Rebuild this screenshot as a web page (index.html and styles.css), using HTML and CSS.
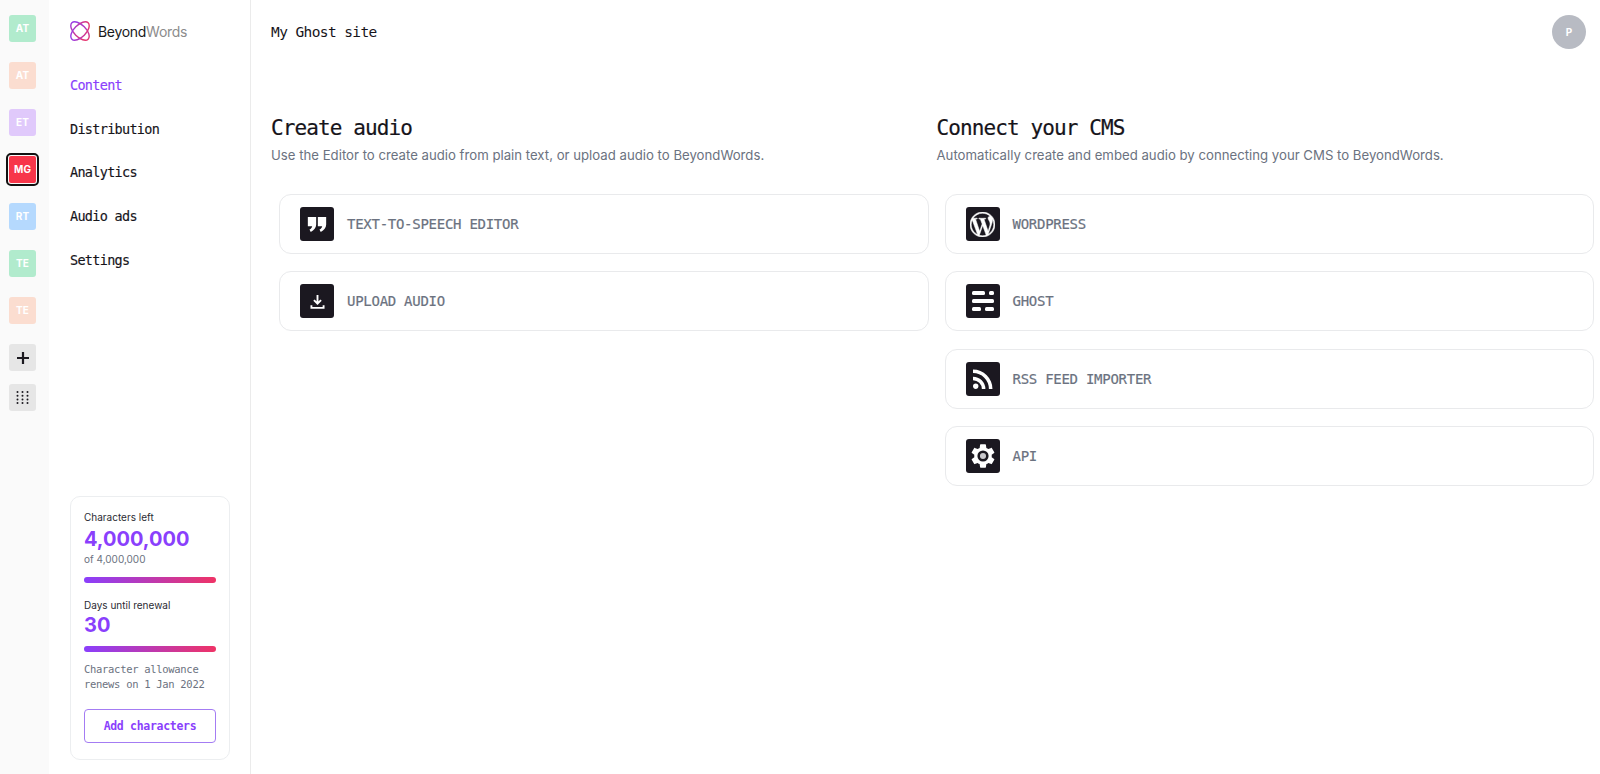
FILE: index.html
```html
<!DOCTYPE html>
<html lang="en">
<head>
<meta charset="utf-8">
<title>BeyondWords</title>
<link rel="stylesheet" href="styles.css">
</head>
<body>
<div class="app">
  <aside class="rail">
    <div class="tile green">AT</div>
    <div class="tile peach">AT</div>
    <div class="tile lilac">ET</div>
    <div class="tile red">MG</div>
    <div class="tile blue">RT</div>
    <div class="tile green">TE</div>
    <div class="tile peach">TE</div>
    <div class="rail-tools">
      <div class="tile tool">
        <svg width="14" height="14" viewBox="0 0 14 14"><path d="M7 1v12M1 7h12" stroke="#1c1a20" stroke-width="2.200"/></svg>
      </div>
      <div class="tile tool">
        <svg width="13" height="13" viewBox="0 0 13 13" fill="#1c1a20"><circle cx="1.500" cy="1" r="1"/><circle cx="6.500" cy="1" r="1"/><circle cx="11.500" cy="1" r="1"/><circle cx="1.500" cy="4.700" r="1"/><circle cx="6.500" cy="4.700" r="1"/><circle cx="11.500" cy="4.700" r="1"/><circle cx="1.500" cy="8.400" r="1"/><circle cx="6.500" cy="8.400" r="1"/><circle cx="11.500" cy="8.400" r="1"/><circle cx="1.500" cy="12" r="1"/><circle cx="6.500" cy="12" r="1"/><circle cx="11.500" cy="12" r="1"/></svg>
      </div>
    </div>
  </aside>
  <nav class="sidebar">
    <div class="logo">
      <svg width="20" height="20" viewBox="0 0 20 20" fill="none" stroke="url(#lg)" stroke-width="1.400">
        <defs><linearGradient id="lg" gradientUnits="userSpaceOnUse" x1="0" y1="2" x2="20" y2="18"><stop offset="0" stop-color="#8b3cf7"/><stop offset="1" stop-color="#f0345f"/></linearGradient></defs>
        <ellipse cx="10" cy="10" rx="11.500" ry="6" transform="rotate(45 10 10)"/>
        <ellipse cx="10" cy="10" rx="11.500" ry="6" transform="rotate(-45 10 10)"/>
      </svg>
      <span class="logo-text">Beyond<span class="logo-light">Words</span></span>
    </div>
    <ul class="menu">
      <li class="active">Content</li>
      <li>Distribution</li>
      <li>Analytics</li>
      <li>Audio ads</li>
      <li>Settings</li>
    </ul>
    <section class="usage">
      <div class="usage-label first">Characters left</div>
      <div class="usage-value">4,000,000</div>
      <div class="usage-of">of 4,000,000</div>
      <div class="bar"></div>
      <div class="usage-label second">Days until renewal</div>
      <div class="usage-value">30</div>
      <div class="bar short"></div>
      <p class="usage-note">Character allowance renews on 1 Jan 2022</p>
      <button class="add-btn">Add characters</button>
    </section>
  </nav>
  <main class="main">
    <header class="topbar">
      <div class="site-name">My Ghost site</div>
      <div class="avatar">P</div>
    </header>
    <div class="columns">
      <section>
        <h2>Create audio</h2>
        <p class="sub">Use the Editor to create audio from plain text, or upload audio to BeyondWords.</p>
        <div class="rows">
          <a class="row">
            <span class="ico"><svg width="20" height="17" viewBox="0 0 24 20" fill="#fff"><path d="M1 1h10v9c0 4-2.500 7-6.500 9l-1.500-3c2-1 3-2.500 3.200-4H1zM13 1h10v9c0 4-2.500 7-6.500 9L15 16c2-1 3-2.500 3.200-4H13z"/></svg></span>
            <span class="row-label">TEXT-TO-SPEECH EDITOR</span>
          </a>
          <a class="row">
            <span class="ico"><svg width="15" height="15" viewBox="0 0 16 16" fill="none" stroke="#fff" stroke-width="2"><path d="M8 1v9M4.200 6.500L8 10.300l3.800-3.800M1.500 12v2.800h13V12"/></svg></span>
            <span class="row-label">UPLOAD AUDIO</span>
          </a>
        </div>
      </section>
      <section>
        <h2>Connect your CMS</h2>
        <p class="sub">Automatically create and embed audio by connecting your CMS to BeyondWords.</p>
        <div class="rows">
          <a class="row">
            <span class="ico"><svg width="25" height="25" viewBox="0 0 24 24" fill="#fff" stroke="#fff" stroke-width=".5"><path d="M21.469 6.825c.84 1.537 1.318 3.3 1.318 5.175 0 3.979-2.156 7.456-5.363 9.325l3.295-9.527c.615-1.54.82-2.771.82-3.864 0-.405-.026-.78-.07-1.11m-7.981.105c.647-.03 1.232-.105 1.232-.105.582-.075.514-.93-.067-.899 0 0-1.755.135-2.88.135-1.064 0-2.85-.15-2.85-.15-.585-.03-.661.855-.075.885 0 0 .54.061 1.125.09l1.68 4.605-2.37 7.08L5.354 6.9c.649-.03 1.234-.1 1.234-.1.585-.075.516-.93-.065-.896 0 0-1.746.138-2.874.138-.2 0-.438-.008-.69-.015C4.911 3.15 8.235 1.215 12 1.215c2.809 0 5.365 1.072 7.286 2.833-.046-.003-.091-.009-.141-.009-1.06 0-1.812.923-1.812 1.914 0 .89.513 1.643 1.06 2.531.411.72.89 1.643.89 2.977 0 .915-.354 1.994-.821 3.479l-1.075 3.585-3.9-11.61.001.014zM12 22.784c-1.059 0-2.081-.153-3.048-.437l3.237-9.406 3.315 9.087c.024.053.05.101.078.149-1.12.393-2.325.609-3.582.609M1.211 12c0-1.564.336-3.05.935-4.39L7.29 21.709C3.694 19.96 1.212 16.271 1.211 12M12 0C5.385 0 0 5.385 0 12s5.385 12 12 12 12-5.385 12-12S18.615 0 12 0"/></svg></span>
            <span class="row-label">WORDPRESS</span>
          </a>
          <a class="row">
            <span class="ico"><svg width="22" height="20" viewBox="0 0 22 20" fill="#fff"><rect x="0" y="0" width="13" height="4" rx="1.500"/><rect x="17" y="0" width="5" height="4" rx="1.500"/><rect x="0" y="8" width="22" height="4" rx="1.500"/><rect x="0" y="16" width="9" height="4" rx="1.500"/><rect x="13" y="16" width="9" height="4" rx="1.500"/></svg></span>
            <span class="row-label">GHOST</span>
          </a>
          <a class="row">
            <span class="ico"><svg width="30" height="30" viewBox="0 0 24 24" fill="#fff"><path d="M6.180 15.640a2.180 2.180 0 012.180 2.180C8.360 19 7.380 20 6.180 20 5 20 4 19 4 17.820a2.180 2.180 0 012.180-2.180M4 4.440A15.560 15.560 0 0119.560 20h-2.830A12.730 12.730 0 004 7.270V4.440m0 5.660a9.900 9.900 0 019.900 9.900h-2.830A7.070 7.070 0 004 12.930V10.100z"/></svg></span>
            <span class="row-label">RSS FEED IMPORTER</span>
          </a>
          <a class="row">
            <span class="ico"><svg width="28" height="28" viewBox="0 0 24 24" fill="#fff"><path d="M19.430 12.970c.04-.32.07-.64.07-.97 0-.33-.03-.66-.07-1l2.110-1.630c.19-.15.24-.42.12-.64l-2-3.460c-.12-.22-.39-.31-.61-.22l-2.490 1c-.52-.39-1.060-.73-1.690-.98l-.37-2.650A.506.506 0 0 0 14 2h-4c-.25 0-.46.18-.5.420l-.37 2.650c-.63.25-1.170.59-1.690.98l-2.490-1c-.22-.09-.49 0-.61.22l-2 3.460c-.13.22-.07.49.12.64L4.570 11c-.04.34-.07.67-.07 1 0 .33.03.65.07.97l-2.110 1.660c-.19.15-.25.42-.12.64l2 3.460c.12.22.39.3.61.22l2.490-1.010c.52.4 1.060.74 1.690.99l.37 2.650c.04.24.25.42.5.42h4c.25 0 .46-.18.5-.42l.37-2.650c.63-.26 1.170-.59 1.690-.99l2.490 1.010c.22.08.49 0 .61-.22l2-3.460c.12-.22.07-.49-.12-.64l-2.110-1.660Z"/><circle cx="12" cy="12" r="3.700" fill="#c9c8cc" stroke="#1b1820" stroke-width="2.200"/></svg></span>
            <span class="row-label">API</span>
          </a>
        </div>
      </section>
    </div>
  </main>
</div>
</body>
</html>
```
FILE: styles.css
```css
* { box-sizing: border-box; }
html, body { margin: 0; height: 100%; }
body { background: #fff; color: #16141a; font-family: Inter, "Noto Sans", sans-serif; overflow: hidden; }
.app { display: flex; height: 774px; }

.rail { width: 49px; flex: none; background: #fafafa; padding: 15px 0 0 9px; display: flex; flex-direction: column; gap: 20px; }
.tile { width: 27px; height: 27px; border-radius: 3px; display: flex; align-items: center; justify-content: center; color: #fff; font-size: 10px; font-weight: 700; font-family: Inter, sans-serif; letter-spacing: .2px; padding-bottom: 1px; }
.green { background: #b1ebcd; }
.peach { background: #fbddd0; }
.lilac { background: #e0c9fb; }
.blue { background: #b5d9fe; }
.red { background: #f7364a; outline: 2px solid #111; outline-offset: 1px; border-radius: 2px; }
.tool { background: #e6e6e6; padding-bottom: 0; }
.rail-tools { display: flex; flex-direction: column; gap: 13px; }

.sidebar { width: 202px; flex: none; border-right: 1px solid #ebebeb; padding: 21px 20px 14px 21px; display: flex; flex-direction: column; }
.logo { display: flex; align-items: center; gap: 8px; height: 20px; }
.logo-text { font-size: 14px; letter-spacing: -.3px; color: #1a1a1a; }
.logo-light { color: #8c8c8c; }

.menu { list-style: none; margin: 35px 0 0; padding: 0; display: flex; flex-direction: column; gap: 24.700px; }
.menu li { font: 13.500px/19px "DejaVu Sans Mono", monospace; letter-spacing: -.7px; -webkit-text-stroke: .15px currentColor; }
.menu .active { color: #8a3ffc; }

.usage { margin-top: auto; width: 160px; height: 264px; border: 1px solid #eceef0; border-radius: 10px; padding: 13px 13px; }
.usage-label { font-size: 10px; line-height: 14px; color: #2b2b33; }
.usage-label.first { margin-bottom: 2px; }
.usage-value { font-size: 20px; font-weight: 700; line-height: 27px; color: #8a3ffc; }
.usage-of { font-size: 10px; line-height: 13px; color: #6b7280; }
.bar { height: 6px; border-radius: 3px; margin-top: 11px; background: linear-gradient(90deg, #8a3ffc, #ef3366); }
.bar.short { margin-top: 7px; }
.second { margin-top: 15px; }
.usage-note { margin: 10px 0 0; font: 10.500px/15px "DejaVu Sans Mono", monospace; letter-spacing: -.3px; color: #6b7280; }
.add-btn { display: block; width: 100%; height: 34px; margin-top: 17px; background: #fff; border: 1px solid #a47cf3; border-radius: 4px; color: #8a3ffc; font: 600 11.500px "DejaVu Sans Mono", monospace; letter-spacing: -.3px; padding: 0; }

.main { flex: 1; min-width: 0; padding: 15px 6px 0 20px; }
.topbar { display: flex; justify-content: space-between; align-items: center; height: 34px; padding-right: 8px; }
.site-name { font: 14.500px "DejaVu Sans Mono", monospace; letter-spacing: -.6px; }
.avatar { width: 34px; height: 34px; border-radius: 50%; background: #b8bbc3; color: #fff; display: flex; align-items: center; justify-content: center; font: 700 10px Inter, sans-serif; }

.columns { display: grid; grid-template-columns: 1fr 1fr; gap: 8px; margin-top: 65px; }
h2 { margin: 0; font: 400 21px/28px "DejaVu Sans Mono", monospace; letter-spacing: -.9px; -webkit-text-stroke: .2px currentColor; }
.sub { margin: 3px 0 0; font-size: 13.200px; line-height: 20px; color: #6b7280; }
.rows { margin: 29px 0 0 8px; display: flex; flex-direction: column; gap: 17.300px; }
.row { height: 60px; border: 1px solid #e9eaec; border-radius: 12px; display: flex; align-items: center; gap: 13px; padding-left: 20px; }
.ico { width: 34px; height: 34px; border-radius: 3px; background: #1b1820; display: flex; align-items: center; justify-content: center; flex: none; }
.row-label { font: 400 14px/16px "DejaVu Sans Mono", monospace; letter-spacing: -.27px; color: #6b7280; -webkit-text-stroke: .2px currentColor; }
```
